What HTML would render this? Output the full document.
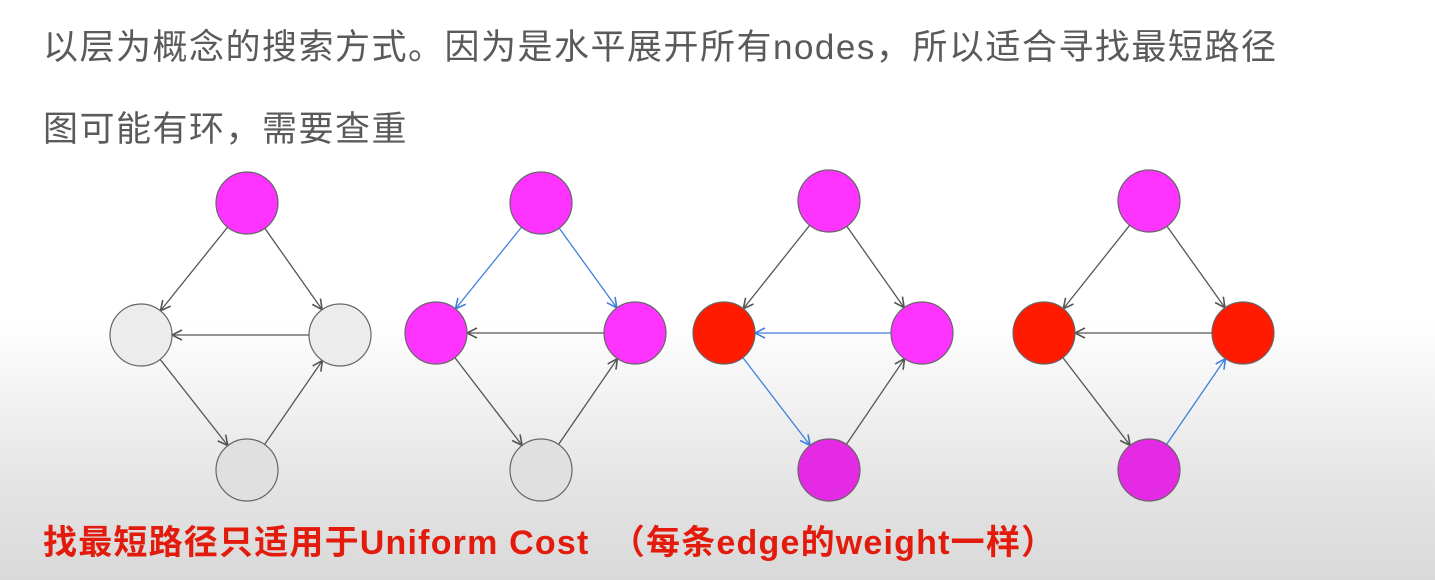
<!DOCTYPE html>
<html><head><meta charset="utf-8"><style>
html,body{margin:0;padding:0}
body{width:1435px;height:580px;overflow:hidden;position:relative;background:linear-gradient(to bottom,#fff 0,#fff 320px,#f2f2f2 400px,#e2e2e2 500px,#d9d9d9 580px);font-family:"Liberation Sans","Noto Sans CJK SC",sans-serif}
.t{position:absolute;left:43px;color:#5a5a5a;font-size:35px;white-space:nowrap;letter-spacing:1.5px}
.r{position:absolute;left:43px;top:515px;color:#e31b0c;font-size:34px;font-weight:bold;white-space:nowrap;letter-spacing:1.2px}
svg{position:absolute;left:0;top:0}
</style></head><body>
<div class="t" style="top:19px">以层为概念的搜索方式。因为是水平展开所有nodes，所以适合寻找最短路径</div>
<div class="t" style="top:101px">图可能有环，需要查重</div>
<svg width="1435" height="580">
<defs>
<marker id="a" markerUnits="userSpaceOnUse" viewBox="-50 -10 60 20" refX="0" refY="0" markerWidth="60" markerHeight="20" orient="auto" overflow="visible"><path d="M-41,-5 L-31,0 L-41,5" fill="none" stroke="#555" stroke-width="1.6"/></marker>
<marker id="b" markerUnits="userSpaceOnUse" viewBox="-50 -10 60 20" refX="0" refY="0" markerWidth="60" markerHeight="20" orient="auto" overflow="visible"><path d="M-41,-5 L-31,0 L-41,5" fill="none" stroke="#3f7fe0" stroke-width="1.6"/></marker>
</defs>
<g stroke-width="1.3" fill="none">
<line x1="247" y1="203" x2="141" y2="335" stroke="#555" marker-end="url(#a)"/>
<line x1="247" y1="203" x2="340" y2="335" stroke="#555" marker-end="url(#a)"/>
<line x1="340" y1="335" x2="141" y2="335" stroke="#555" marker-end="url(#a)"/>
<line x1="141" y1="335" x2="247" y2="470" stroke="#555" marker-end="url(#a)"/>
<line x1="247" y1="470" x2="340" y2="335" stroke="#555" marker-end="url(#a)"/>
<line x1="541" y1="203" x2="436" y2="333" stroke="#3f7fe0" marker-end="url(#b)"/>
<line x1="541" y1="203" x2="635" y2="333" stroke="#3f7fe0" marker-end="url(#b)"/>
<line x1="635" y1="333" x2="436" y2="333" stroke="#555" marker-end="url(#a)"/>
<line x1="436" y1="333" x2="541" y2="470" stroke="#555" marker-end="url(#a)"/>
<line x1="541" y1="470" x2="635" y2="333" stroke="#555" marker-end="url(#a)"/>
<line x1="829" y1="201" x2="724" y2="333" stroke="#555" marker-end="url(#a)"/>
<line x1="829" y1="201" x2="922" y2="333" stroke="#555" marker-end="url(#a)"/>
<line x1="922" y1="333" x2="724" y2="333" stroke="#3f7fe0" marker-end="url(#b)"/>
<line x1="724" y1="333" x2="829" y2="470" stroke="#3f7fe0" marker-end="url(#b)"/>
<line x1="829" y1="470" x2="922" y2="333" stroke="#555" marker-end="url(#a)"/>
<line x1="1149" y1="201" x2="1044" y2="333" stroke="#555" marker-end="url(#a)"/>
<line x1="1149" y1="201" x2="1243" y2="333" stroke="#555" marker-end="url(#a)"/>
<line x1="1243" y1="333" x2="1044" y2="333" stroke="#555" marker-end="url(#a)"/>
<line x1="1044" y1="333" x2="1149" y2="470" stroke="#555" marker-end="url(#a)"/>
<line x1="1149" y1="470" x2="1243" y2="333" stroke="#3f7fe0" marker-end="url(#b)"/>
</g>
<g stroke="#666" stroke-width="1.2">
<circle cx="247" cy="203" r="31" fill="#ff33ff"/>
<circle cx="141" cy="335" r="31" fill="#ececec"/>
<circle cx="340" cy="335" r="31" fill="#ececec"/>
<circle cx="247" cy="470" r="31" fill="#e0e0e0"/>
<circle cx="541" cy="203" r="31" fill="#ff33ff"/>
<circle cx="436" cy="333" r="31" fill="#ff33ff"/>
<circle cx="635" cy="333" r="31" fill="#ff33ff"/>
<circle cx="541" cy="470" r="31" fill="#e0e0e0"/>
<circle cx="829" cy="201" r="31" fill="#ff33ff"/>
<circle cx="724" cy="333" r="31" fill="#ff1a00"/>
<circle cx="922" cy="333" r="31" fill="#ff33ff"/>
<circle cx="829" cy="470" r="31" fill="#e52ae5"/>
<circle cx="1149" cy="201" r="31" fill="#ff33ff"/>
<circle cx="1044" cy="333" r="31" fill="#ff1a00"/>
<circle cx="1243" cy="333" r="31" fill="#ff1a00"/>
<circle cx="1149" cy="470" r="31" fill="#e52ae5"/>
</g>
</svg>
<div class="r">找最短路径只适用于Uniform Cost &nbsp;（每条edge的weight一样）</div>
</body></html>
